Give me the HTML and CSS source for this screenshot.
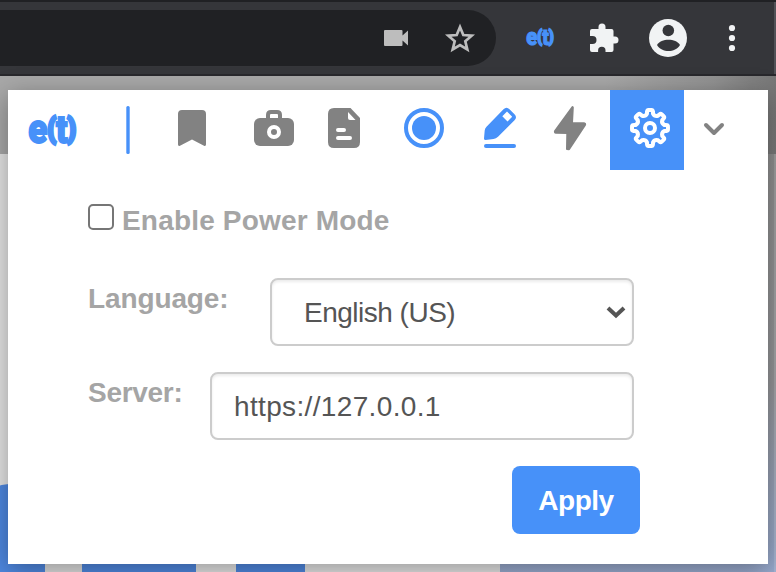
FILE: index.html
```html
<!DOCTYPE html>
<html lang="en">
<head>
<meta charset="utf-8">
<title>e(t) settings</title>
<link rel="stylesheet" href="styles.css">
</head>
<body>
<div class="window">
  <header class="toolbar">
    <div class="omnibox">
      <svg width="60" height="56" viewBox="366 10 60 56"><path fill="#bdbdbd" d="M385 30h16.500q1 0 1 1v4.500l5.500-5v15l-5.500-5V45q0 1-1 1H385q-1 0-1-1V31q0-1 1-1z"/></svg>
      <svg width="70" height="56" viewBox="426 10 70 56"><path fill="none" stroke="#bdbdbd" stroke-width="2.700" d="M460 27l3.300 8 8.400.7-6.400 5.500 2 8.300-7.300-4.500-7.300 4.500 2-8.300-6.400-5.500 8.400-.7z"/></svg>
    </div>
    <svg class="brand" width="80" height="72" viewBox="496 2 80 72"><text transform="translate(526.300 45.200) scale(.404 .577)" textLength="68" lengthAdjust="spacingAndGlyphs">e<tspan class="paren" dy="-5.500">(</tspan><tspan class="tee" dy="5.500">t</tspan><tspan class="paren" dy="-5.500">)</tspan></text></svg>
    <svg width="58" height="72" viewBox="576 2 58 72"><path fill="#f1f3f4" d="M592 29h6.500v-2a3.500 3.500 0 0 1 7 0v2h6q2 0 2 2v5.500h1.500a3.500 3.500 0 0 1 0 7H613.500V50q0 2-2 2h-6v-1.500a3.700 3.700 0 0 0-7.400 0V52H592q-2 0-2-2v-6h2.500a4 4 0 0 0 0-8H590v-5q0-2 2-2z"/></svg>
    <svg width="68" height="72" viewBox="634 2 68 72"><circle cx="668" cy="38" r="19" fill="#f1f3f4"/><circle cx="668.300" cy="30.500" r="5.800" fill="#35363a"/><path fill="#35363a" d="M657 45c4-7 19-7 23 0-5 8-18 8-23 0z"/></svg>
    <svg width="60" height="72" viewBox="702 2 60 72" fill="#f1f3f4"><circle cx="732" cy="28" r="3.100"/><circle cx="732" cy="38" r="3.100"/><circle cx="732" cy="48" r="3.100"/></svg>
  </header>
  <main class="page">
    <div class="page-top"></div>
    <div class="page-body">
      <svg width="500" height="418" viewBox="0 154 500 418"><circle cx="21" cy="573" r="90" fill="#4f88e0"/><path fill="#dedede" d="M45 500h38v72H45z"/><path fill="#4f88e0" d="M82 550h114v22H82zM236 550h69v22h-69z"/></svg>
      <div class="photo"></div>
    </div>
    <section class="popup">
      <nav class="tabs">
        <svg class="brand" width="102" height="80" viewBox="8 90 102 80"><text transform="translate(28.300 143.300) scale(.7 1)" textLength="68" lengthAdjust="spacingAndGlyphs">e<tspan class="paren" dy="-5.500">(</tspan><tspan class="tee" dy="5.500">t</tspan><tspan class="paren" dy="-5.500">)</tspan></text></svg>
        <svg width="36" height="80" viewBox="110 90 36 80"><rect x="126.300" y="106" width="3.400" height="48" rx="1.500" fill="#4791f9"/></svg>
        <svg width="92" height="80" viewBox="146 90 92 80"><path fill="#828282" d="M182 110h20q4 0 4 4v30.500q0 2-2 1.300L192 139.500 180 145.800q-2 .7-2-1.300V114q0-4 4-4z"/></svg>
        <svg width="72" height="80" viewBox="238 90 72 80"><path fill="none" stroke="#828282" stroke-width="4" d="M268 119v-4q0-3 3-3h6q3 0 3 3v4"/><rect x="254" y="118" width="40" height="28" rx="6" fill="#828282"/><circle cx="274" cy="132" r="5" fill="none" stroke="#fff" stroke-width="4"/></svg>
        <svg width="68" height="80" viewBox="310 90 68 80"><path fill="#828282" d="M334 108h16.500L360 118v24q0 6-6 6h-20q-6 0-6-6v-28q0-6 6-6z"/><path fill="#fff" d="M348 112v6q0 2 2 2h5.500z"/><path stroke="#fff" stroke-width="4" stroke-linecap="round" d="M338 130h6M338 138h12"/></svg>
        <svg width="92" height="80" viewBox="378 90 92 80"><circle cx="424" cy="128" r="18" fill="none" stroke="#4791f9" stroke-width="4"/><circle cx="424" cy="128" r="12" fill="#4791f9"/></svg>
        <svg width="60" height="80" viewBox="470 90 60 80"><path fill="#4791f9" fill-rule="evenodd" d="M503.500 109.300q3-3 6 0l5 5q3 3 0 6l-16.500 16.500q-2 2-4.500 2.200L485.500 140q-1.500 0-1.500-1.500l.7-8q.2-2.200 1.800-3.700zM507 111.500l-4.700 4.700 5.200 5.200 4.700-4.700z"/><path stroke="#4791f9" stroke-width="4" stroke-linecap="round" d="M486 146h28"/></svg>
        <svg width="80" height="80" viewBox="530 90 80 80"><path fill="#828282" stroke="#828282" stroke-width="2" stroke-linejoin="round" d="M572.500 107L555 131q-.5 1.500 1 1.800l11.300.2-.3 16 2 .2L585 125q.6-1.500-1-1.800L572 123l.8-15.500z"/></svg>
        <svg class="active" width="74" height="80" viewBox="610 90 74 80"><g fill="none" stroke="#fff" stroke-width="4" stroke-linejoin="round"><path id="gear" d=""/><circle cx="650" cy="128" r="5"/></g></svg>
        <svg width="60" height="80" viewBox="684 90 60 80"><path fill="none" stroke="#828282" stroke-width="4" stroke-linecap="round" stroke-linejoin="round" d="M706 125l8 8 8-8"/></svg>
      </nav>
      <form class="settings">
        <label class="power"><input type="checkbox"><span>Enable Power Mode</span></label>
        <div class="field language">
          <label for="language">Language:</label>
          <div class="select-box">
            <select id="language"><option>English (US)</option></select>
            <svg width="20" height="14" viewBox="0 0 20 14"><path fill="none" stroke="#555" stroke-width="4" d="M2 3l8 7.500L18 3"/></svg>
          </div>
        </div>
        <div class="field server">
          <label for="server">Server:</label>
          <input id="server" type="text" value="https://127.0.0.1" spellcheck="false">
        </div>
        <button type="button">Apply</button>
      </form>
    </section>
  </main>
</div>
<script src="gear.js"></script>
</body>
</html>
```

FILE: gear.js
```js
// Eight rounded teeth around (650, 128), alternating with concave valleys.
const point = (radius, angle) => {
  const a = angle * Math.PI / 180;
  return (650 + radius * Math.sin(a)).toFixed(2) + " " + (128 - radius * Math.cos(a)).toFixed(2);
};
let d = "";
for (let i = 0; i < 8; i++) {
  const a = i * 45;
  d += (i ? "L" : "M") + point(14.6, a - 12) + "L" + point(16.8, a - 10) +
    "Q" + point(18.4, a - 9) + " " + point(18, a - 4) +
    "L" + point(18, a + 4) +
    "Q" + point(18.4, a + 9) + " " + point(16.8, a + 10) +
    "L" + point(14.6, a + 12) +
    "Q" + point(12.3, a + 22.5) + " " + point(14.6, a + 33);
}
document.getElementById("gear").setAttribute("d", d + "Z");
```

FILE: styles.css
```css
* { box-sizing: border-box; }
body { margin: 0; font-family: "Liberation Sans", Arial, sans-serif; }
svg { display: block; flex: none; }
.window { width: 776px; height: 572px; overflow: hidden; }
.toolbar {
  display: flex;
  align-items: center;
  height: 76px;
  background: #35363a;
  border-top: 2px solid #202124;
  border-bottom: 2px solid #28282c;
  box-shadow: inset -2px 0 #515257;
}
.omnibox {
  display: flex;
  justify-content: flex-end;
  width: 496px;
  height: 56px;
  background: #202124;
  border-radius: 0 28px 28px 0;
}
.brand text {
  font: 900 41px Roboto, "Liberation Sans", sans-serif;
  fill: #4791f9;
  stroke: #4791f9;
  stroke-width: 1.8px;
}
.brand .paren { font-size: 28px; stroke-width: 3.5px; }
.brand .tee { font-size: 39px; }
.page { position: relative; height: 496px; }
.page-top { height: 78px; background: linear-gradient(90deg, #a8a8a8 0 78%, #929292 92%, #777); }
.page-body { display: flex; height: 418px; background: #e4e4e4; }
.photo { flex: 1; background: linear-gradient(#8e8e8e, #949598 55%, #98aace); box-shadow: inset -2px 0 rgba(255,255,255,.15); }
.popup {
  position: absolute;
  left: 8px;
  top: 14px;
  width: 760px;
  height: 474px;
  background: #fff;
  box-shadow: 0 6px 24px rgba(0,0,0,.34);
}
.tabs { display: flex; height: 80px; }
.active { background: #4791f9; }
.settings {
  display: flex;
  flex-direction: column;
  width: 632px;
  padding: 33px 6px 0 80px;
  color: #a5a5a5;
  font-size: 28px;
  font-weight: 700;
}
.power { display: flex; height: 75px; line-height: 35px; letter-spacing: .18px; }
.power input {
  appearance: none;
  width: 26px;
  height: 26px;
  margin: 1px 8px 0 0;
  border: 2px solid #767676;
  border-radius: 5px;
}
.field { display: flex; justify-content: space-between; height: 68px; line-height: 42px; }
.language { margin-bottom: 26px; letter-spacing: -.12px; }
.server { letter-spacing: -.3px; }
.select-box {
  display: grid;
  grid-template-columns: 1fr 26px;
  align-items: center;
  width: 364px;
  border: 2px solid #ccc;
  border-radius: 8px;
  box-shadow: inset 0 2px 3px rgba(0,0,0,.08);
}
.select-box select {
  appearance: none;
  width: 100%;
  height: 64px;
  padding: 0 0 0 32px;
  border: 0;
  background: transparent;
  color: #555;
  font: 28px "Liberation Sans", Arial, sans-serif;
  letter-spacing: -.5px;
}
#server {
  width: 424px;
  height: 68px;
  padding: 2px 22px 0;
  border: 2px solid #ccc;
  border-radius: 8px;
  box-shadow: inset 0 2px 3px rgba(0,0,0,.08);
  color: #555;
  font: 28px "Liberation Sans", Arial, sans-serif;
  letter-spacing: .35px;
}
.settings button {
  align-self: flex-end;
  width: 128px;
  height: 68px;
  margin: 26px -6px 0 0;
  padding: 2px 0 0;
  border: 0;
  border-radius: 8px;
  background: #4791f9;
  color: #fff;
  font: 700 28px "Liberation Sans", Arial, sans-serif;
  letter-spacing: -.5px;
}
```
